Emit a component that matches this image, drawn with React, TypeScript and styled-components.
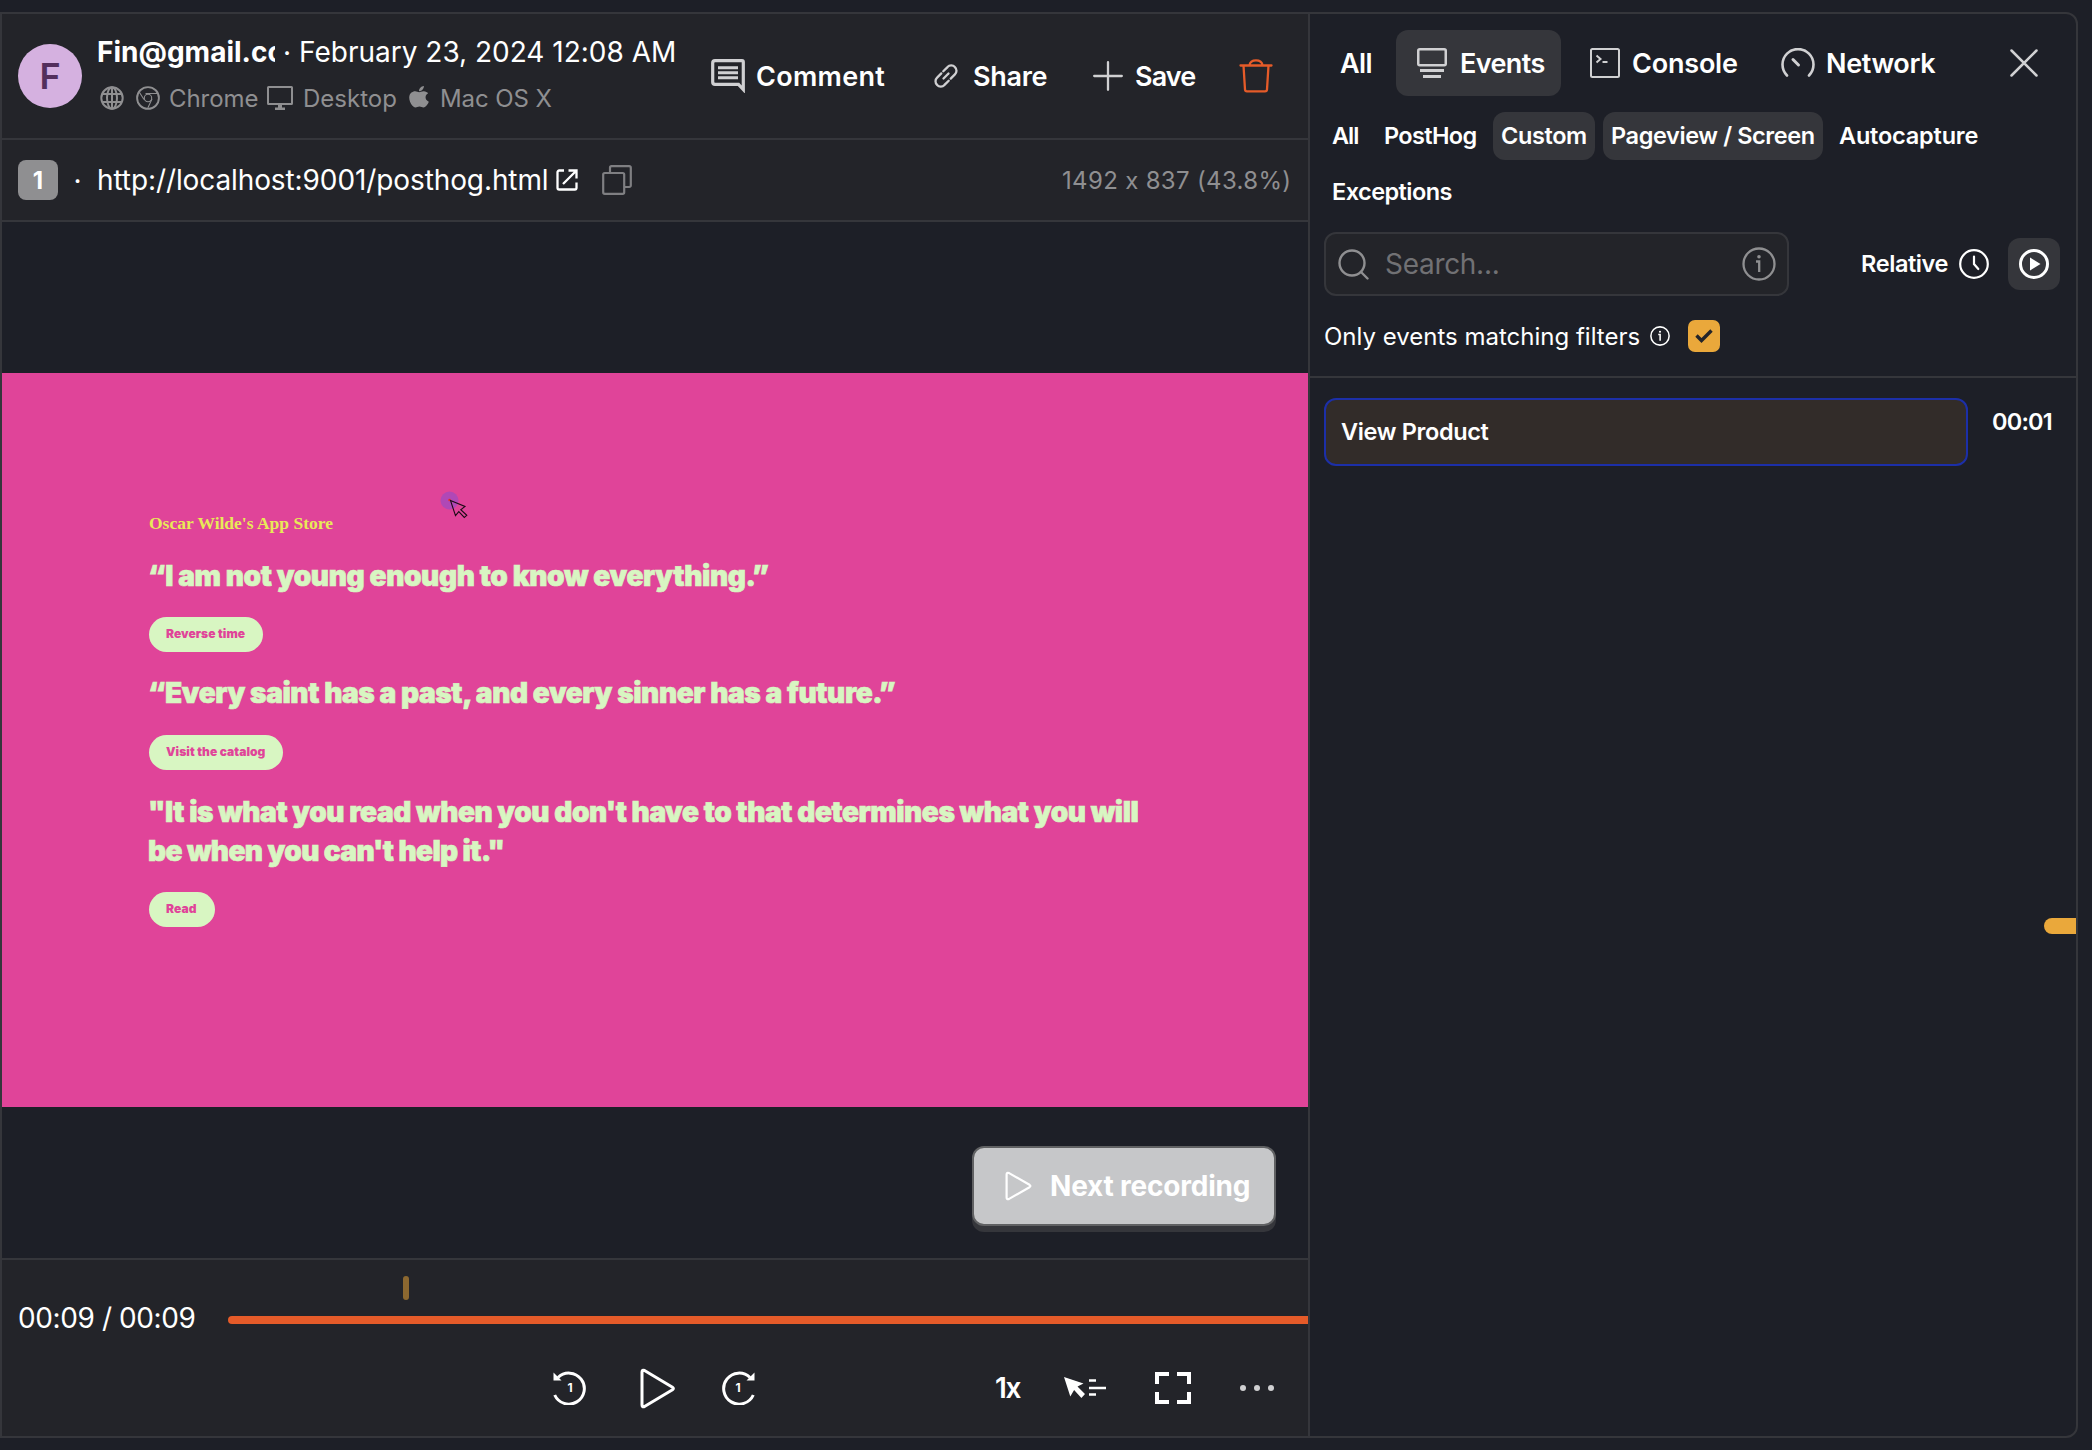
import React from 'react';
import styled, { createGlobalStyle } from 'styled-components';

const sans = `Inter, "Liberation Sans", sans-serif`;
const line = '#35363b';

const GlobalStyle = createGlobalStyle`
  * { box-sizing: border-box; }
  body { margin: 0; background: #1d1f27; font-family: ${sans}; color: #fff; font-feature-settings: "calt" 0; }
  button { font: inherit; font-feature-settings: inherit; color: inherit; background: none; border: 0; padding: 0; margin: 0; text-align: left; }
  h1, h2, p { margin: 0; }
  svg { display: block; flex: none; }
`;

const Page = styled.div`
  width: 2092px;
  height: 1450px;
  padding: 12px 14px 12px 0;
  overflow: hidden;
`;

const Frame = styled.div`
  display: flex;
  width: 2078px;
  height: 1426px;
  border: 2px solid ${line};
  border-radius: 0 12px 12px 0;
  overflow: hidden;
`;

const Player = styled.section`
  display: flex;
  flex-direction: column;
  flex: none;
  width: 1308px;
  border-right: 2px solid ${line};
`;

interface LabelProps { $w: number; $size?: number; $weight?: number; $ls?: number; $color?: string; }
const Label = styled.span<LabelProps>`
  display: block;
  flex: none;
  width: ${p => p.$w}px;
  padding-top: ${p => ((p.$size ?? 28) >= 24 ? 2 : (p.$size ?? 28) > 20 ? 1 : 0)}px;
  font-size: ${p => p.$size ?? 28}px;
  font-weight: ${p => p.$weight ?? 400};
  letter-spacing: ${p => p.$ls ?? 0}px;
  color: ${p => p.$color ?? 'inherit'};
  line-height: 1.2;
  white-space: nowrap;
`;

const Header = styled.header`
  display: flex;
  flex: none;
  align-items: center;
  height: 126px;
  padding: 0 35px 0 16px;
  background: #232429;
  border-bottom: 2px solid ${line};
`;

const Avatar = styled.div`
  display: flex;
  align-items: center;
  justify-content: center;
  width: 64px;
  height: 64px;
  border-radius: 50%;
  background: #d5b1e0;
  color: #532f5c;
  font-size: 36px;
  font-weight: 600;
`;

const Person = styled.div`
  align-self: flex-start;
  display: flex;
  flex-direction: column;
  margin: 14px 0 0 15px;
  width: 581px;
`;

const PersonLine = styled.div<{ $h: number }>`
  display: flex;
  align-items: center;
  height: ${p => p.$h}px;
`;

const Clipped = styled.div`
  width: 178px;
  overflow: hidden;
`;

const Dot = styled.span<{ $w: number }>`
  width: ${p => p.$w}px;
  padding-top: 2px;
  text-align: center;
  font-size: 28px;
`;

const Meta = styled.div<{ $pad: number; $gap: number }>`
  display: flex;
  align-items: center;
  gap: ${p => p.$gap}px;
  padding-left: ${p => p.$pad}px;
  color: #8f8f91;
`;

const Actions = styled.div`
  display: flex;
  align-items: center;
  margin-left: auto;
`;

const Action = styled.button<{ $gap?: number; $ml?: number }>`
  display: flex;
  align-items: center;
  gap: ${p => p.$gap ?? 12}px;
  margin-left: ${p => p.$ml ?? 0}px;
`;

const UrlBar = styled.div`
  display: flex;
  flex: none;
  align-items: center;
  height: 82px;
  padding: 0 18px 0 16px;
  background: #232429;
  border-bottom: 2px solid ${line};
`;

const Count = styled.div`
  display: flex;
  align-items: center;
  justify-content: center;
  width: 40px;
  height: 40px;
  padding-top: 1px;
  border-radius: 8px;
  background: #8f8f91;
  font-size: 24px;
  font-weight: 700;
`;

const UrlIcons = styled.div`
  display: flex;
  align-items: center;
  gap: 24px;
  margin-left: 8px;
`;

const Push = styled.div`
  margin-left: auto;
`;

const Stage = styled.div`
  position: relative;
  display: flex;
  flex-direction: column;
  flex: none;
  height: 1036px;
  padding-top: 151px;
`;

const Replay = styled.div`
  position: relative;
  height: 734px;
  padding: 139px 0 0 147px;
  background: #e04499;
`;

const StoreName = styled.h1`
  height: 23px;
  font: 700 17.5px/22px "Liberation Serif", "Times New Roman", serif;
  color: #e8ea57;
  white-space: nowrap;
`;

const Quote = styled.h2<{ $mt: number }>`
  display: flex;
  flex-direction: column;
  margin: ${p => p.$mt}px 0 0 -1px;
  color: #d8f6c2;
  -webkit-text-stroke: 0.7px #d8f6c2;
  > span { line-height: 37px; }
`;

const Pill = styled.button<{ $mt: number; $w: number }>`
  display: flex;
  align-items: center;
  width: ${p => p.$w}px;
  height: 35px;
  padding-left: 17px;
  margin-top: ${p => p.$mt}px;
  border-radius: 18px;
  background: #d8f6c2;
  color: #e04499;
`;

const Mouse = styled.div`
  position: absolute;
  left: 438px;
  top: 118px;
`;

const NextButton = styled.button`
  position: absolute;
  right: 32px;
  bottom: 32px;
  display: flex;
  align-items: center;
  gap: 18px;
  width: 304px;
  height: 80px;
  padding-left: 31px;
  border: 2px solid #606163;
  border-radius: 12px;
  background: #c6c7c9;
  box-shadow: 0 6px 0 ${line};
`;

const Controller = styled.footer`
  display: flex;
  flex-direction: column;
  flex: 1;
  padding: 16px 0 0 16px;
  background: #232429;
  border-top: 2px solid ${line};
`;

const Seek = styled.div`
  display: flex;
  flex: none;
  height: 60px;
`;

const Time = styled.div`
  display: flex;
  align-items: center;
  width: 210px;
  height: 84px;
`;

const Track = styled.div`
  flex: 1;
`;

const Tick = styled.div`
  width: 6px;
  height: 24px;
  margin-left: 175px;
  border-radius: 3px;
  background: #8c6830;
`;

const Bar = styled.div`
  height: 8px;
  margin-top: 16px;
  border-radius: 4px 0 0 4px;
  background: #e55b29;
`;

const Controls = styled.div`
  display: flex;
  flex: none;
  align-items: center;
  height: 100px;
  padding: 4px 0 0 535px;
`;

const Transport = styled.div`
  display: flex;
  align-items: center;
  width: 442px;
`;

const PlayButton = styled.button`
  margin: 0 46px 0 53px;
`;

const Options = styled.div`
  display: flex;
  align-items: center;
`;

const Inspector = styled.aside`
  display: flex;
  flex-direction: column;
  flex: 1;
`;

const InspectorHead = styled.div`
  flex: none;
  height: 364px;
  border-bottom: 2px solid ${line};
`;

const Tabs = styled.div`
  display: flex;
  align-items: center;
  height: 98px;
  padding-left: 30px;
`;

const Tab = styled.button<{ $active?: boolean; $w: number; $pad?: number; $gap?: number }>`
  display: flex;
  align-items: center;
  gap: ${p => p.$gap ?? 12}px;
  width: ${p => p.$w}px;
  height: 66px;
  padding-left: ${p => p.$pad ?? 0}px;
  border-radius: 12px;
  background: ${p => (p.$active ? '#35363b' : 'transparent')};
`;

const Chips = styled.div`
  display: flex;
  flex-wrap: wrap;
  gap: 8px;
  padding-left: 14px;
`;

const Chip = styled.button<{ $active?: boolean }>`
  display: flex;
  align-items: center;
  height: 48px;
  padding: 0 9px 0 8px;
  border-radius: 12px;
  background: ${p => (p.$active ? '#35363b' : 'transparent')};
`;

const SearchRow = styled.div`
  display: flex;
  align-items: center;
  height: 64px;
  margin-top: 16px;
  padding: 0 16px 0 14px;
`;

const SearchBox = styled.div`
  display: flex;
  align-items: center;
  gap: 16px;
  width: 465px;
  height: 64px;
  padding: 0 11px 0 12px;
  border: 2px solid ${line};
  border-radius: 12px;
  background: #232429;
  > svg:last-child { margin-left: auto; }
`;

const PlayToggle = styled.button`
  display: flex;
  align-items: center;
  justify-content: center;
  width: 52px;
  height: 52px;
  margin-left: 19px;
  border-radius: 12px;
  background: #35363b;
`;

const FilterRow = styled.div`
  display: flex;
  align-items: center;
  height: 32px;
  margin-top: 24px;
  padding-left: 14px;
`;

const Checkbox = styled.div`
  display: flex;
  align-items: center;
  justify-content: center;
  width: 32px;
  height: 32px;
  margin-left: 18px;
  border-radius: 7px;
  background: #eaa83b;
`;

const EventList = styled.div`
  position: relative;
  flex: 1;
  padding: 20px 0 0 14px;
`;

const EventRow = styled.div`
  display: flex;
  gap: 24px;
`;

const EventCard = styled.div`
  display: flex;
  align-items: center;
  width: 644px;
  height: 68px;
  padding-left: 15px;
  border: 2px solid #1c2fa8;
  border-radius: 12px;
  background: #322c29;
`;

const EventTime = styled.div`
  padding-top: 9px;
`;

const Marker = styled.div`
  position: absolute;
  right: 0;
  top: 540px;
  width: 32px;
  height: 16px;
  border-radius: 8px 0 0 8px;
  background: #eaa83b;
`;

const Digit = styled.span`
  position: absolute;
  inset: 0;
  display: flex;
  align-items: center;
  justify-content: center;
  padding-top: 1px;
  font-size: 12px;
  font-weight: 700;
`;

const SkipButton = styled.button`
  position: relative;
  width: 34px;
  height: 36px;
  margin-bottom: 2px;
`;

const ICON = '#d0d0d2';

const Globe = () => (
  <svg width="24" height="24" viewBox="0 0 24 24" fill="none" stroke="currentColor" strokeWidth="2">
    <circle cx="12" cy="12" r="10.7" />
    <ellipse cx="12" cy="12" rx="5" ry="10.7" />
    <path d="M12 1.3v21.4M2.500 8h19M2.500 16h19" />
  </svg>
);

const Chrome = () => (
  <svg width="24" height="24" viewBox="0 0 24 24" fill="none" stroke="currentColor" strokeWidth="1.1">
    <circle cx="12" cy="12" r="10.900" strokeWidth="1.900" />
    <circle cx="12" cy="12" r="3.700" />
    <path d="M9.500 7.500h11.500M8 13.500L3.500 6.500M16 13l-4.200 9" />
  </svg>
);

const Desktop = () => (
  <svg width="26" height="24" viewBox="0 0 26 24" fill="currentColor">
    <path fillRule="evenodd" d="M1.500 0h23a1.500 1.500 0 0 1 1.500 1.500v16a1.500 1.500 0 0 1-1.500 1.500H15v2.500h3V24H8v-2.500h3V19H1.500A1.500 1.500 0 0 1 0 17.500v-16A1.500 1.500 0 0 1 1.500 0zM2 2v15h22V2z" />
  </svg>
);

const Apple = () => (
  <svg width="20" height="23" viewBox="0 0 384 480" fill="currentColor" preserveAspectRatio="none">
    <path d="M318.700 236.700c-.2-36.700 16.400-64.400 50-84.800-18.800-26.900-47.200-41.700-84.700-44.600-35.500-2.800-74.300 20.700-88.500 20.700-15 0-49.400-19.700-76.400-19.700C63.300 109.200 4 152.800 4 241.500q0 39.300 14.400 81.200c12.800 36.700 59 126.700 107.200 125.200 25.200-.6 43-17.900 75.800-17.900 31.800 0 48.300 17.900 76.400 17.900 48.600-.7 90.400-82.500 102.600-119.300-65.200-30.700-61.700-90-61.700-91.900zm-56.600-164.200c27.300-32.400 24.800-61.900 24-72.500-24.100 1.400-52 16.400-67.900 34.900-17.500 19.800-27.800 44.300-25.600 71.900 26.100 2 49.900-11.400 69.500-34.300z" />
  </svg>
);

const CommentIcon = () => (
  <svg width="34" height="34" viewBox="0 0 34 34" fill="none" stroke={ICON} strokeWidth="3.2">
    <path d="M4 1.700h27a1.300 1.300 0 0 1 1.300 1.300v27.500l-4.800-5.200H4a2.300 2.300 0 0 1-2.300-2.300V4A2.300 2.300 0 0 1 4 1.700z" />
    <path d="M7 8.700h20M7 13.700h20M7 18.700h20" strokeWidth="3" />
  </svg>
);

const LinkIcon = () => (
  <svg width="24" height="24" viewBox="0 0 24 24" fill="none" stroke={ICON} strokeWidth="2.300" strokeLinecap="round">
    <path d="M9.500 14.500l5-5" />
    <path d="M9.300 7.300l4.200-4.200a5 5 0 0 1 7.400 0a5 5 0 0 1 0 7.300l-4.200 4.200" />
    <path d="M14.700 16.700l-4.200 4.200a5 5 0 0 1-7.400 0a5 5 0 0 1 0-7.300l4.200-4.200" />
  </svg>
);

const PlusIcon = () => (
  <svg width="30" height="30" viewBox="0 0 30 30" fill="none" stroke={ICON} strokeWidth="2.300" strokeLinecap="round">
    <path d="M15 1.200v27.600M1.200 15h27.600" />
  </svg>
);

const Trash = () => (
  <svg width="34" height="34" viewBox="0 0 34 34" fill="none" stroke="#e55b29" strokeWidth="2.300" strokeLinecap="round" strokeLinejoin="round">
    <path d="M1.500 6.500h31M4.500 6.500l1.500 24a2 2 0 0 0 2 1.900h18a2 2 0 0 0 2-1.900l1.500-24M10.500 6C11 3 13.500 1.300 17 1.300S23 3 23.500 6" />
  </svg>
);

const OpenIcon = () => (
  <svg width="22" height="22" viewBox="0 0 22 22" fill="none" stroke="#fff" strokeWidth="2.300">
    <path d="M8 1.500H3.200A1.700 1.700 0 0 0 1.500 3.200v15.600a1.700 1.700 0 0 0 1.700 1.700h15.600a1.700 1.700 0 0 0 1.700-1.700V13.500M12.500 1.500h8v8M20 2L7 15" />
  </svg>
);

const CopyIcon = () => (
  <svg width="30" height="30" viewBox="0 0 30 30" fill="none" stroke="#7f7f82" strokeWidth="2.200">
    <rect x="1.200" y="8" width="21" height="20.800" rx="1.500" />
    <path d="M8 8V2.700A1.500 1.500 0 0 1 9.500 1.200h17.800A1.500 1.500 0 0 1 28.800 2.700v17.800a1.500 1.500 0 0 1-1.500 1.500H22" />
  </svg>
);

const Pointer = () => (
  <svg width="34" height="34" viewBox="0 0 34 34">
    <circle cx="9.500" cy="9.500" r="9" fill="#6a4fe0" fillOpacity=".4" />
    <circle cx="9.500" cy="9" r="1.300" fill="#f03030" />
    <path d="M10.500 9.500L25 15.500l-4.200 3.200 6 5.600-2.500 2.200-5.500-5.800-3.300 4z" fill="none" stroke="#1c0b16" strokeWidth="1.100" />
  </svg>
);

const PlayIcon = ({ w, h, sw }: { w: number; h: number; sw: number }) => (
  <svg width={w} height={h} viewBox={`0 0 ${w} ${h}`} fill="none" stroke="#fff" strokeWidth={sw} strokeLinejoin="round">
    <path d={`M${sw / 2 + 0.500} ${sw / 2 + 2.500}q0-2.500 2.500-1.500L${w - 2.500} ${h / 2 - 1.200}q1.800 1.200 0 2.400L${sw / 2 + 3} ${h - sw / 2 - 1}q-2.500 1-2.500-1.500z`} />
  </svg>
);

const Skip = ({ forward }: { forward?: boolean }) => (
  <SkipButton>
    <svg width="34" height="36" viewBox="0 0 34 36" fill="none" stroke="#fff" strokeWidth="3" transform={forward ? 'scale(-1 1)' : undefined}>
      <path d="M5 8.500A15.500 15.500 0 1 1 1.700 26" />
      <path d="M0.500 3.500v8h8z" fill="#fff" stroke="none" />
    </svg>
    <Digit>1</Digit>
  </SkipButton>
);

const SkipInactive = () => (
  <svg width="43" height="22" viewBox="0 0 43 22" fill="#fff">
    <path d="M0 0l19.500 6.500-6 3L21 17l-3.600 4-7.300-8-3.800 6.500z" />
    <path d="M25 3.500h7M25 11h17M25 17.500h7" stroke="#fff" strokeWidth="2.500" />
  </svg>
);

const Fullscreen = () => (
  <svg width="36" height="32" viewBox="0 0 36 32" fill="none" stroke="#fff" strokeWidth="4">
    <path d="M14 2H2v10M22 2h12v10M14 30H2V20M22 30h12V20" />
  </svg>
);

const More = () => (
  <svg width="34" height="6" viewBox="0 0 34 6" fill={ICON}>
    <circle cx="3" cy="3" r="3" /><circle cx="17" cy="3" r="3" /><circle cx="31" cy="3" r="3" />
  </svg>
);

const EventsIcon = () => (
  <svg width="30" height="30" viewBox="0 0 30 30" fill="none" stroke={ICON} strokeWidth="2.500">
    <rect x="1.250" y="1.250" width="27.500" height="16" rx="1.500" />
    <path d="M3 22.500h24M6 28.500h18" strokeWidth="3" />
  </svg>
);

const ConsoleIcon = () => (
  <svg width="30" height="30" viewBox="0 0 30 30" fill="none" stroke={ICON} strokeWidth="2">
    <rect x="1" y="1" width="28" height="28" rx="1.500" />
    <path d="M6.500 7.500l4 3.500-4 3.500M12.500 14h5" />
  </svg>
);

const NetworkIcon = () => (
  <svg width="34" height="30" viewBox="0 0 34 30" fill="none" stroke={ICON} strokeWidth="2.600" strokeLinecap="round">
    <path d="M6 27.500A15.500 15.500 0 1 1 28 27.500" />
    <path d="M12 11.500l5.500 5.500" strokeWidth="3" />
  </svg>
);

const CloseIcon = () => (
  <svg width="28" height="28" viewBox="0 0 28 28" fill="none" stroke={ICON} strokeWidth="2.500" strokeLinecap="round">
    <path d="M1.500 1.500l25 25M26.500 1.500l-25 25" />
  </svg>
);

const SearchIcon = () => (
  <svg width="31" height="31" viewBox="0 0 31 31" fill="none" stroke="#8f8f91" strokeWidth="2.400" strokeLinecap="round">
    <circle cx="14" cy="14" r="12.500" />
    <path d="M23 23l6.500 6.500" />
  </svg>
);

const InfoIcon = ({ size, color }: { size: number; color: string }) => (
  <svg width={size} height={size} viewBox="0 0 34 34" fill="none" stroke={color} strokeWidth={size > 25 ? 2.300 : 2.600}>
    <circle cx="17" cy="17" r="15.500" />
    <path d="M14 14.500h3.200V25" />
    <circle cx="17" cy="9.800" r="1.800" fill={color} stroke="none" />
  </svg>
);

const Clock = () => (
  <svg width="30" height="30" viewBox="0 0 30 30" fill="none" stroke="#fff" strokeWidth="2.200" strokeLinecap="round">
    <circle cx="15" cy="15" r="13.800" />
    <path d="M15 7.500V15l4.300 5" />
  </svg>
);

const PlayCircle = () => (
  <svg width="30" height="30" viewBox="0 0 30 30" fill="none" stroke="#fff" strokeWidth="3">
    <circle cx="15" cy="15" r="13.500" />
    <path d="M11 8.500v13L21.500 15z" fill="#fff" stroke="none" />
  </svg>
);

const Check = () => (
  <svg width="18" height="14" viewBox="0 0 18 14" fill="none" stroke="#232429" strokeWidth="3.400">
    <path d="M1.500 6.500l5 5L16.500 1.500" />
  </svg>
);

const CHIPS = [
  { text: 'All', w: 27, ls: -1 },
  { text: 'PostHog', w: 92, ls: -0.65 },
  { text: 'Custom', w: 85, ls: -0.38, active: true },
  { text: 'Pageview / Screen', w: 203, ls: -0.4, active: true },
  { text: 'Autocapture', w: 138, ls: -0.2 },
  { text: 'Exceptions', w: 119, ls: -0.55 },
];

export default function App() {
  return (
    <Page>
      <GlobalStyle />
      <Frame>
        <Player>
          <Header>
            <Avatar>F</Avatar>
            <Person>
              <PersonLine $h={48}>
                <Clipped><Label $w={178} $weight={700}>Fin@gmail.com</Label></Clipped>
                <Dot $w={24}>·</Dot>
                <Label $w={377}>February 23, 2024 12:08 AM</Label>
              </PersonLine>
              <PersonLine $h={44}>
                <Meta $pad={3} $gap={0}><Globe /></Meta>
                <Meta $pad={12} $gap={9}><Chrome /><Label $w={89} $size={24} $ls={-0.05}>Chrome</Label></Meta>
                <Meta $pad={9} $gap={10}><Desktop /><Label $w={93} $size={24}>Desktop</Label></Meta>
                <Meta $pad={13} $gap={11}><Apple /><Label $w={111} $size={24} $ls={-0.1}>Mac OS X</Label></Meta>
              </PersonLine>
            </Person>
            <Actions>
              <Action $gap={11}><CommentIcon /><Label $w={129} $size={27} $weight={600} $ls={0.3}>Comment</Label></Action>
              <Action $ml={49} $gap={15}><LinkIcon /><Label $w={74} $size={27} $weight={600} $ls={-0.3}>Share</Label></Action>
              <Action $ml={46} $gap={12}><PlusIcon /><Label $w={61} $size={27} $weight={600} $ls={-0.9}>Save</Label></Action>
              <Action $ml={43}><Trash /></Action>
            </Actions>
          </Header>
          <UrlBar>
            <Count>1</Count>
            <Dot $w={39}>·</Dot>
            <Label $w={451} $ls={-0.1}>http://localhost:9001/posthog.html</Label>
            <UrlIcons><OpenIcon /><CopyIcon /></UrlIcons>
            <Push><Label $w={228} $size={24} $ls={0.33} $color="#8f8f91">1492 x 837 (43.8%)</Label></Push>
          </UrlBar>
          <Stage>
            <Replay>
              <StoreName>Oscar Wilde's App Store</StoreName>
              <Quote $mt={21}><Label $w={621} $weight={900} $ls={-0.36}>“I am not young enough to know everything.”</Label></Quote>
              <Pill $mt={22} $w={114}><Label $w={80} $size={12} $weight={900} $ls={0.05}>Reverse time</Label></Pill>
              <Quote $mt={21}><Label $w={747} $weight={900} $ls={-0.39}>“Every saint has a past, and every sinner has a future.”</Label></Quote>
              <Pill $mt={23} $w={134}><Label $w={100} $size={12} $weight={900} $ls={0.05}>Visit the catalog</Label></Pill>
              <Quote $mt={22}>
                <Label $w={992} $weight={900} $ls={-0.42}>"It is what you read when you don't have to that determines what you will</Label>
                <Label $w={358} $weight={900} $ls={-0.58}>be when you can't help it."</Label>
              </Quote>
              <Pill $mt={22} $w={66}><Label $w={32} $size={12} $weight={900} $ls={0.1}>Read</Label></Pill>
              <Mouse><Pointer /></Mouse>
            </Replay>
            <NextButton>
              <PlayIcon w={27} h={30} sw={2.2} />
              <Label $w={200} $weight={700} $ls={-0.2}>Next recording</Label>
            </NextButton>
          </Stage>
          <Controller>
            <Seek>
              <Time><Label $w={178} $ls={-0.4}>00:09 / 00:09</Label></Time>
              <Track><Tick /><Bar /></Track>
            </Seek>
            <Controls>
              <Transport>
                <Skip />
                <PlayButton><PlayIcon w={35} h={41} sw={3} /></PlayButton>
                <Skip forward />
              </Transport>
              <Options>
                <Label $w={27} $weight={600} $ls={-1.4}>1x</Label>
                <Action $ml={42}><SkipInactive /></Action>
                <Action $ml={48}><Fullscreen /></Action>
                <Action $ml={49}><More /></Action>
              </Options>
            </Controls>
          </Controller>
        </Player>
        <Inspector>
          <InspectorHead>
            <Tabs>
              <Tab $w={56}><Label $w={33} $size={27} $weight={600} $ls={-0.6}>All</Label></Tab>
              <Tab $w={165} $pad={21} $gap={13} $active><EventsIcon /><Label $w={86} $size={27} $weight={600} $ls={-0.6}>Events</Label></Tab>
              <Tab $w={191} $pad={29}><ConsoleIcon /><Label $w={106} $size={27} $weight={600} $ls={-0.2}>Console</Label></Tab>
              <Tab $w={258} $pad={29} $gap={11}><NetworkIcon /><Label $w={110} $size={27} $weight={600} $ls={-0.35}>Network</Label></Tab>
              <CloseIcon />
            </Tabs>
            <Chips>
              {CHIPS.map(c => (
                <Chip key={c.text} $active={c.active}>
                  <Label $w={c.w} $size={23.5} $weight={600} $ls={c.ls}>{c.text}</Label>
                </Chip>
              ))}
            </Chips>
            <SearchRow>
              <SearchBox>
                <SearchIcon />
                <Label $w={117} $ls={-0.3} $color="#717174">Search...</Label>
                <InfoIcon size={34} color="#8f8f91" />
              </SearchBox>
              <Push><Action $gap={11}><Label $w={87} $size={23.5} $weight={600} $ls={-0.4}>Relative</Label><Clock /></Action></Push>
              <PlayToggle><PlayCircle /></PlayToggle>
            </SearchRow>
            <FilterRow>
              <Label $w={326} $size={24}>Only events matching filters</Label>
              <InfoIcon size={20} color="#fff" />
              <Checkbox><Check /></Checkbox>
            </FilterRow>
          </InspectorHead>
          <EventList>
            <EventRow>
              <EventCard><Label $w={149} $size={23.5} $weight={600} $ls={-0.35}>View Product</Label></EventCard>
              <EventTime><Label $w={62} $size={23.5} $weight={600} $ls={-0.8}>00:01</Label></EventTime>
            </EventRow>
            <Marker />
          </EventList>
        </Inspector>
      </Frame>
    </Page>
  );
}
